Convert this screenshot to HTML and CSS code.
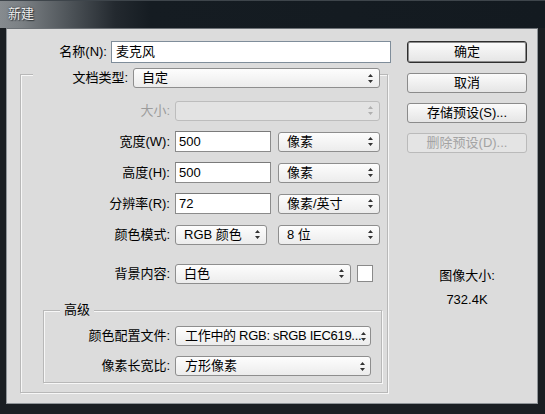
FILE: index.html
```html
<!DOCTYPE html>
<html lang="zh-CN">
<head>
<meta charset="utf-8">
<title>新建</title>
<link rel="stylesheet" href="styles.css">
</head>
<body>
<div class="window">
  <div class="titlebar"><span class="title">新建</span></div>
  <div class="frame">
    <div class="client">
      <div class="main">
        <div class="row name-row">
          <label class="lbl lbl-name">名称(N):</label>
          <div class="input input-name">麦克风</div>
        </div>

        <fieldset class="group outer">
          <legend class="legend-outer">
            <div class="legend-row">
              <label class="lbl lbl-doc">文档类型:</label>
              <div class="select sel-doc"><span>自定</span><svg class="arr" width="5" height="9" viewBox="0 0 5 9"><path d="M2.5 0 L5 3 L0 3 Z M0 6 L5 6 L2.5 9 Z"/></svg></div>
            </div>
          </legend>

          <div class="rows">
            <div class="row">
              <label class="lbl lbl-wide disabled">大小:</label>
              <div class="select sel-size is-disabled"><span></span><svg class="arr" width="5" height="9" viewBox="0 0 5 9"><path d="M2.5 0 L5 3 L0 3 Z M0 6 L5 6 L2.5 9 Z"/></svg></div>
            </div>
            <div class="row">
              <label class="lbl lbl-wide">宽度(W):</label>
              <div class="input input-num">500</div>
              <div class="select sel-unit"><span>像素</span><svg class="arr" width="5" height="9" viewBox="0 0 5 9"><path d="M2.5 0 L5 3 L0 3 Z M0 6 L5 6 L2.5 9 Z"/></svg></div>
            </div>
            <div class="row">
              <label class="lbl lbl-wide">高度(H):</label>
              <div class="input input-num">500</div>
              <div class="select sel-unit"><span>像素</span><svg class="arr" width="5" height="9" viewBox="0 0 5 9"><path d="M2.5 0 L5 3 L0 3 Z M0 6 L5 6 L2.5 9 Z"/></svg></div>
            </div>
            <div class="row">
              <label class="lbl lbl-wide">分辨率(R):</label>
              <div class="input input-num">72</div>
              <div class="select sel-unit"><span>像素/英寸</span><svg class="arr" width="5" height="9" viewBox="0 0 5 9"><path d="M2.5 0 L5 3 L0 3 Z M0 6 L5 6 L2.5 9 Z"/></svg></div>
            </div>
            <div class="row">
              <label class="lbl lbl-wide">颜色模式:</label>
              <div class="select sel-mode"><span>RGB 颜色</span><svg class="arr" width="5" height="9" viewBox="0 0 5 9"><path d="M2.5 0 L5 3 L0 3 Z M0 6 L5 6 L2.5 9 Z"/></svg></div>
              <div class="select sel-unit sel-bits"><span>8 位</span><svg class="arr" width="5" height="9" viewBox="0 0 5 9"><path d="M2.5 0 L5 3 L0 3 Z M0 6 L5 6 L2.5 9 Z"/></svg></div>
            </div>
            <div class="row bg-row">
              <label class="lbl lbl-wide">背景内容:</label>
              <div class="select sel-bg"><span>白色</span><svg class="arr" width="5" height="9" viewBox="0 0 5 9"><path d="M2.5 0 L5 3 L0 3 Z M0 6 L5 6 L2.5 9 Z"/></svg></div>
              <div class="swatch"></div>
            </div>
          </div>

          <fieldset class="group inner">
            <legend class="legend-inner">高级</legend>
            <div class="rows rows-inner">
              <div class="row row-sm">
                <label class="lbl lbl-inner">颜色配置文件:</label>
                <div class="select sel-adv"><span class="tight">工作中的 RGB: sRGB IEC619...</span><svg class="arr" width="5" height="9" viewBox="0 0 5 9"><path d="M2.5 0 L5 3 L0 3 Z M0 6 L5 6 L2.5 9 Z"/></svg></div>
              </div>
              <div class="row row-sm">
                <label class="lbl lbl-inner">像素长宽比:</label>
                <div class="select sel-adv"><span>方形像素</span><svg class="arr" width="5" height="9" viewBox="0 0 5 9"><path d="M2.5 0 L5 3 L0 3 Z M0 6 L5 6 L2.5 9 Z"/></svg></div>
              </div>
            </div>
          </fieldset>
        </fieldset>
      </div>

      <div class="side">
        <button class="btn btn-default">确定</button>
        <button class="btn">取消</button>
        <button class="btn">存储预设(S)...</button>
        <button class="btn" disabled>删除预设(D)...</button>
        <div class="size-info">
          <div class="size-label">图像大小:</div>
          <div class="size-value">732.4K</div>
        </div>
      </div>
    </div>
  </div>
</div>
</body>
</html>
```

FILE: styles.css
```css
* { box-sizing: border-box; }

html, body {
  margin: 0;
  padding: 0;
  background: #161b20;
}

body {
  font-family: "Liberation Sans", "Noto Sans CJK SC", sans-serif;
  font-size: 13px;
  color: #000;
}

.window {
  width: 545px;
  height: 414px;
  display: flex;
  flex-direction: column;
  background: #181d21;
}

.titlebar {
  height: 28px;
  flex: none;
  display: flex;
  align-items: center;
  padding: 0 0 2px 8px;
  border-top: 1px solid #3e454b;
  background: linear-gradient(to right, #868b8f 0, #7b8084 22px, #4d5358 70px, #23292f 115px, #151c22 150px, #131a20 100%);
}

.title {
  color: #ececec;
  font-size: 13px;
  line-height: 16px;
  text-shadow: 0 0 2px #2a2f33, 1px 1px 1px #3a3f43;
}

.frame {
  flex: 1;
  display: flex;
  padding: 0 7px 10px 6px;
  background: #1a1e22;
}

.client {
  flex: 1;
  display: flex;
  gap: 16px;
  padding-top: 12px;
  background: #dcdcdc;
  border: 1px solid #8f9498;
  border-top-color: #6c7176;
}

.main {
  width: 384px;
  flex: none;
}

.row {
  display: flex;
  align-items: center;
  height: 21px;
}

.name-row {
  height: 22px;
  gap: 4px;
}

.lbl {
  text-align: right;
  line-height: 16px;
  white-space: nowrap;
  flex: none;
  padding-right: 1px;
}

.lbl.disabled { color: #9c9c9c; }

.lbl-name { width: 101px; }
.lbl-doc { width: 96px; }
.lbl-wide { width: 150px; }
.lbl-inner { width: 127px; }

.input {
  height: 100%;
  background: #fff;
  border: 1px solid #8b8b8b;
  border-top-color: #7a7a7a;
  padding-left: 3px;
  line-height: 19px;
  white-space: nowrap;
  flex: none;
}

.input-name {
  width: 280px;
  margin-left: -1px;
  border-color: #7f8d9a;
  padding-left: 4px;
}

.input-num { width: 96px; }

.select {
  height: 20px;
  flex: none;
  display: flex;
  align-items: center;
  justify-content: space-between;
  padding: 0 6px 0 8px;
  border: 1px solid #8e8e8e;
  border-radius: 3px;
  background: linear-gradient(#fdfdfd, #ececec);
  line-height: 16px;
  white-space: nowrap;
}

.select span { overflow: hidden; }

.select span.tight {
  overflow: visible;
  letter-spacing: -0.3px;
}

.select .arr { fill: #333; flex: none; }

.select.is-disabled {
  border-color: #bdbdbd;
  background: #e3e3e3;
}

.select.is-disabled .arr { fill: #b0b0b0; }

.sel-doc { width: 247px; }
.sel-size { width: 205px; }
.sel-unit { width: 102px; margin-left: 7px; }
.sel-mode { width: 92px; }
.sel-bits { margin-left: 11px; }
.sel-bg { width: 176px; }
.sel-adv { width: 196px; padding: 0 5px 0 9px; }

.row > .input-num,
.row > .select:first-of-type { margin-left: 4px; }

.row > .sel-bits { margin-left: 11px; }

.swatch {
  width: 16px;
  height: 17px;
  margin-left: 6px;
  background: #fff;
  border: 1px solid #8a8a8a;
  flex: none;
}

/* group boxes (etched) */
.group {
  margin: 0;
  padding: 0;
  min-width: 0;
  border: 1px solid #b8b8b8;
  box-shadow: 1px 1px 0 #f7f7f7, inset 1px 1px 0 #f7f7f7;
}

.outer {
  width: 368px;
  margin: -3px 0 0 13px;
  padding-bottom: 9px;
}

.legend-outer {
  margin-left: 12px;
  padding: 8px 0 0 0;
  background: #dcdcdc;
}

.legend-row {
  display: flex;
  align-items: center;
  gap: 4px;
}

.rows {
  display: flex;
  flex-direction: column;
  gap: 10px;
  padding-top: 12px;
}

.bg-row { margin-top: 8px; }

.inner {
  width: 339px;
  margin: 18px 0 0 22px;
  padding-bottom: 6px;
}

.legend-inner {
  margin-left: 16px;
  padding: 0 4px;
  line-height: 16px;
  background: #dcdcdc;
}

.rows-inner {
  padding-top: 8px;
}

.row-sm { height: 20px; }

/* right column */
.side {
  width: 120px;
  flex: none;
  display: flex;
  flex-direction: column;
  gap: 10px;
}

.btn {
  height: 20px;
  width: 120px;
  margin: 0;
  padding: 0;
  font: inherit;
  color: #000;
  line-height: 16px;
  border: 1px solid #8b8b8b;
  border-radius: 3px;
  background: linear-gradient(#fbfbfb, #e5e5e5);
}

.btn-default {
  height: 22px;
  border: 1px solid #2e2e2e;
  box-shadow: inset 0 0 0 1px #8c8c8c;
}

.btn:disabled {
  color: #a3a3a3;
  border-color: #bababa;
  background: #e4e4e4;
}

.size-info {
  margin-top: 105px;
  text-align: center;
  line-height: 16px;
}

.size-value {
  margin-top: 8px;
}
```
